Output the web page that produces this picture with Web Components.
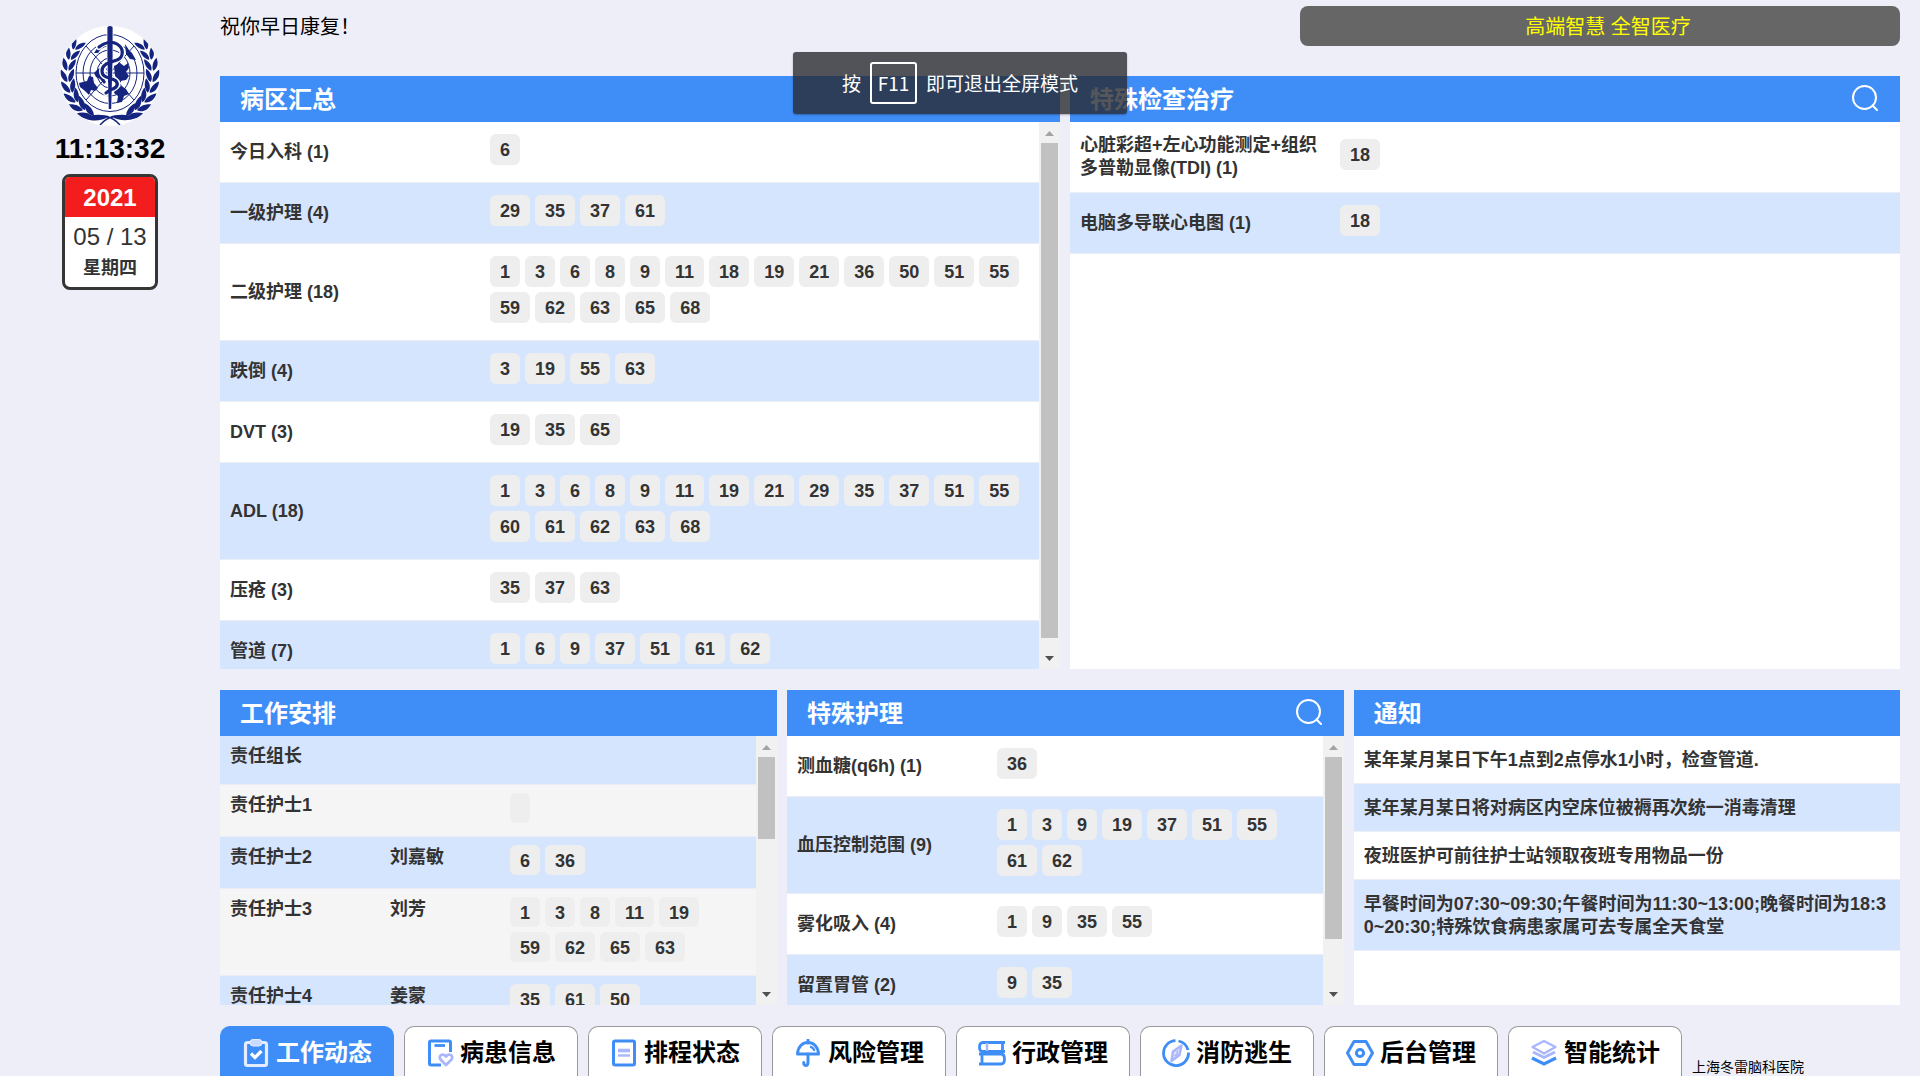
<!DOCTYPE html>
<html lang="zh-CN">
<head>
<meta charset="utf-8">
<title>病区看板</title>
<style>
html, body { height: 100%; }
body { margin: 0; background: #eeeef8; overflow: hidden;
  font-family: "Liberation Sans", "Noto Sans CJK SC", sans-serif; color: #333; }
</style>
</head>
<body>
<ward-board></ward-board>

<script>
const make = (name, css, html, setup) => {
  const tpl = document.createElement('template');
  tpl.innerHTML = `<style>*{box-sizing:border-box}${css}</style>${html}`;
  customElements.define(name, class extends HTMLElement {
    constructor() {
      super();
      this.attachShadow({ mode: 'open' }).append(tpl.content.cloneNode(true));
    }
    connectedCallback() {
      if (this.ready) return;
      this.ready = true;
      if (setup) setup(this, this.shadowRoot);
    }
  });
};

/* ---------- data ---------- */
const bedData = {
  summary: [
    ['今日入科 (1)', '6'],
    ['一级护理 (4)', '29 35 37 61'],
    ['二级护理 (18)', '1 3 6 8 9 11 18 19 21 36 50 51 55 59 62 63 65 68'],
    ['跌倒 (4)', '3 19 55 63'],
    ['DVT (3)', '19 35 65'],
    ['ADL (18)', '1 3 6 8 9 11 19 21 29 35 37 51 55 60 61 62 63 68'],
    ['压疮 (3)', '35 37 63'],
    ['管道 (7)', '1 6 9 37 51 61 62']
  ],
  exam: [
    ['心脏彩超+左心功能测定+组织多普勒显像(TDI) (1)', '18'],
    ['电脑多导联心电图 (1)', '18']
  ],
  care: [
    ['测血糖(q6h) (1)', '36'],
    ['血压控制范围 (9)', '1 3 9 19 37 51 55 61 62'],
    ['雾化吸入 (4)', '1 9 35 55'],
    ['留置胃管 (2)', '9 35']
  ]
};
const dutyData = [
  ['责任组长', '', null],
  ['责任护士1', '', ''],
  ['责任护士2', '刘嘉敏', '6 36'],
  ['责任护士3', '刘芳', '1 3 8 11 19 59 62 65 63'],
  ['责任护士4', '姜蒙', '35 61 50']
];

/* ---------- emblem ---------- */
const laurel = () => {
  let out = '';
  const leaf = (x, y, r, s) =>
    `<path transform="translate(${x.toFixed(1)} ${y.toFixed(1)}) rotate(${r.toFixed(0)}) scale(${s})" d="M0 0C-4.400-4-3.600-11 0.500-16C3.200-11 3.400-4 0 0Z"/>`;
  for (let i = 0; i < 8; i++) {
    const a = (24 + i * 14) * Math.PI / 180;
    const x = 50 - 42.5 * Math.sin(a), y = 48 + 46 * Math.cos(a);
    const dir = Math.atan2(-42.5 * Math.cos(a), 46 * Math.sin(a)) * 180 / Math.PI;
    const s = (1 - i * 0.03).toFixed(2);
    out += leaf(x - 0.8, y, dir - 20, s) + leaf(x + 1.2, y, dir + 26, s);
  }
  return out;
};
make('ward-emblem', `:host{display:block;width:100px;height:100px}svg{display:block}`, `
<svg width="100" height="100" viewBox="0 0 100 100" role="img" aria-label="徽标">
  <defs><clipPath id="c"><circle cx="50" cy="50" r="50"/></clipPath></defs>
  <g clip-path="url(#c)" fill="#15247f">
    <rect width="100" height="100" fill="#fff"/>
    <g>${laurel()}</g>
    <g transform="translate(100 0) scale(-1 1)">${laurel()}</g>
    <ellipse cx="50" cy="47" rx="35" ry="39.500" fill="#fff"/>
    <path d="M24 92C32 88 42 88 52 91C58 94 66 96 76 92C68 88 58 88 48 91C42 95 32 96 24 92Z"/>
    <path d="M40 99Q46 92 53 91M60 99Q54 92 47 91" fill="none" stroke="#15247f" stroke-width="1.400"/>
    <g fill="none" stroke="#15247f" stroke-width="1">
      <ellipse cx="50" cy="47" rx="34" ry="38.500"/>
      <ellipse cx="50" cy="47" rx="27" ry="30.500"/>
      <ellipse cx="50" cy="47" rx="20" ry="23"/>
      <ellipse cx="50" cy="47" rx="13" ry="15"/>
      <path d="M16 47H84M26 20L74 74M74 20L26 74"/>
    </g>
    <path d="M19 57L27 55L29 50L33 51L34 57L38 62L35 65L31 64L29 69L25 65L20 61Z"/>
    <path d="M34 47L38 43L41 41L42 50L46 56L44 58L40 53L36 51Z"/>
    <path d="M54 40L60 37L64 40L68 37L69 42L66 46L69 50L66 54L60 55L55 50Z"/>
    <path d="M55 63L61 60L66 63L69 68L64 70L62 76L57 77L58 70L54 67Z"/>
    <path d="M65 18L69 24L72 27L76 34L70 33L66 28Z"/>
    <path d="M34 27L38 21L44 17L47 20L41 23L38 27Z"/>
    <path d="M46.500 1Q50-1 53.500 1L52 83H48Z" fill="#fff"/>
    <g fill="none" stroke-linecap="round" stroke-linejoin="round">
      <path d="M39 21C45 16 52 15 57 18C64 22 64 31 57 34C49 37 42 38 42 45C42 53 52 51 56 55C60 60 54 63 50 64L46 67" stroke="#fff" stroke-width="6"/>
      <path d="M39 21C45 16 52 15 57 18C64 22 64 31 57 34C49 37 42 38 42 45C42 53 52 51 56 55C60 60 54 63 50 64L46 67" stroke="#15247f" stroke-width="3.200"/>
    </g>
    <path d="M47.400 1Q50-1 52.600 1V30L51.200 83H48.800L47.400 30Z"/>
  </g>
</svg>`);

/* ---------- date card ---------- */
make('date-card', `
:host{display:block;width:96px;border:3px solid #363636;border-radius:8px;background:#fff;overflow:hidden;text-align:center}
.y{height:40px;line-height:41px;background:#f31d1d;color:#fff;font-size:24px;font-weight:700}
.d{height:36px;line-height:40px;font-size:24px}
.w{height:34px;line-height:30px;font-size:18px;font-weight:700}`,
`<div class="y"><slot name="year"></slot></div><div class="d"><slot name="day"></slot></div><div class="w"><slot name="week"></slot></div>`);

make('side-rail', `
:host{display:flex;flex-direction:column;align-items:center;width:220px;padding-top:26px;flex:none}
time{font-size:28px;font-weight:700;line-height:46px;padding-bottom:2px;color:#000}`,
`<ward-emblem></ward-emblem><time>11:13:32</time>
<date-card><span slot="year">2021</span><span slot="day">05 / 13</span><span slot="week">星期四</span></date-card>`);

/* ---------- scroll bar ---------- */
make('scroll-bar', `
:host{display:flex;flex-direction:column;flex:none;width:21px;background:#f1f1f1}
svg{display:block;flex:none}
.track{flex:1;min-height:0;padding:0 2px}
.thumb{background:#c1c1c1;height:var(--thumb)}`,
`<svg width="21" height="21" viewBox="0 0 21 21"><path d="M6 14L10.500 9L15 14Z" fill="#a3a3a3"/></svg>
<div class="track"><div class="thumb"></div></div>
<svg width="21" height="21" viewBox="0 0 21 21"><path d="M6 8L10.500 13L15 8Z" fill="#505050"/></svg>`,
(el) => el.style.setProperty('--thumb', el.getAttribute('thumb')));

/* ---------- panel ---------- */
make('ward-panel', `
:host{display:flex;flex-direction:column;min-width:0;min-height:0;background:#fff}
header{display:flex;align-items:center;justify-content:space-between;height:46px;flex:none;padding:0 22px 0 20px;background:#3f8ef8;color:#fff}
h2{margin:0;font-size:24px;line-height:44px;padding-top:2px;font-weight:700}
button{display:block;width:26px;height:26px;padding:0;margin:0 0 2px;border:0;background:none;color:inherit}
button svg{display:block}
:host(:not([search])) button{display:none}
.body{flex:1;min-height:0;display:flex}
.content{flex:1;min-width:0;overflow:hidden}`,
`<header><h2></h2><button type="button" aria-label="搜索"><svg width="26" height="26" viewBox="0 0 26 26" fill="none" stroke="currentColor" stroke-width="2" stroke-linecap="round"><circle cx="12.500" cy="12.500" r="11.500"/><path d="M20.500 20.500L25 25"/></svg></button></header>
<div class="body"><div class="content"><slot></slot></div></div>`,
(el, root) => {
  root.querySelector('h2').textContent = el.getAttribute('heading');
  if (el.hasAttribute('thumb')) {
    const bar = document.createElement('scroll-bar');
    bar.setAttribute('thumb', el.getAttribute('thumb'));
    root.querySelector('.body').append(bar);
  }
});

/* ---------- bed chips ---------- */
make('bed-chips', `
:host{display:flex;flex-wrap:wrap}
span{min-width:20px;height:var(--chip-height,31px);line-height:32px;padding:0 10px;margin:0 5px 5px 0;border-radius:6px;background:#eee;font-size:18px;font-weight:700}`, ``,
(el, root) => {
  for (const bed of el.getAttribute('beds').split(' ')) {
    const s = document.createElement('span');
    s.textContent = bed;
    root.append(s);
  }
});

const tableCss = `
:host{display:block}
table{width:100%;border-collapse:separate;border-spacing:0;table-layout:fixed;font-size:18px;line-height:23px;font-weight:700}
th,td{text-align:left;font-weight:700;border-bottom:1px solid #ebeef5}`;

make('bed-table', `${tableCss}
th,td{padding:12px 10px;vertical-align:middle}
td{padding-left:0}
th{width:var(--label,270px)}
tr:nth-child(even){background:#d6e5fe}`, `<table><tbody></tbody></table>`,
(el, root) => {
  root.querySelector('tbody').innerHTML = bedData[el.getAttribute('source')]
    .map(([label, beds]) => `<tr><th scope="row">${label}</th><td><bed-chips beds="${beds}"></bed-chips></td></tr>`).join('');
});

make('duty-table', `${tableCss}
:host{--chip-height:30px}
th,td{padding:8px 0;vertical-align:top;line-height:24px}
tr{height:49px;background:#f5f5f5}
tr:nth-child(odd){background:#d6e5fe}
th{width:170px;padding-left:10px}
.name{width:120px}
td:last-child{padding-right:10px}`, `<table><tbody></tbody></table>`,
(el, root) => {
  root.querySelector('tbody').innerHTML = dutyData
    .map(([role, name, beds]) => `<tr><th scope="row">${role}</th><td class="name">${name}</td><td>${beds === null ? '' : `<bed-chips beds="${beds}"></bed-chips>`}</td></tr>`).join('');
});

make('notice-item', `
:host{display:block;padding:13px 10px 11px;border-bottom:1px solid #ebeef5;font-size:18px;line-height:23px;font-weight:700;word-break:break-all}
:host(:nth-of-type(even)){background:#d6e5fe}`, `<slot></slot>`);

/* ---------- bottom tabs ---------- */
const B = '#3f8ef8', L = '#a9b6fb';
const icons = {
  task: `<rect x="3.500" y="3.500" width="21" height="23" rx="2" fill="none" stroke="#e4edff" stroke-width="3.200"/><rect x="8" y="0.500" width="12" height="6.500" rx="3" fill="#c9dcff" stroke="#e4edff"/><path d="M9 14.500L13 18.500L19.500 12" fill="none" stroke="#fff" stroke-width="3.200"/>`,
  patient: `<path d="M24.500 13V3.500Q24.500 2 23 2H5Q3.500 2 3.500 3.500V24.500Q3.500 26 5 26H15" fill="none" stroke="${B}" stroke-width="3"/><path d="M8.500 6.500H19" stroke="${B}" stroke-width="2.800"/><path d="M20 26L14.500 20.500C12 17 16.500 13.500 20 17.500C23.500 13.500 28 17 25.500 20.500Z" fill="#fff" stroke="${L}" stroke-width="2.800" stroke-linejoin="round"/>`,
  schedule: `<rect x="3.500" y="2" width="21" height="24" rx="1.500" fill="none" stroke="${B}" stroke-width="3"/><path d="M8 11.500H20" stroke="${L}" stroke-width="3.600"/><path d="M8 16.500H20" stroke="${L}" stroke-width="2.400"/>`,
  risk: `<path d="M3.500 15C4 7 9 3.500 14 3.500S24 7 24.500 15Z" fill="none" stroke="${B}" stroke-width="3" stroke-linejoin="round"/><path d="M14 1V4M14 15V23Q14 26.500 11.800 26.500T9.800 23.500" fill="none" stroke="${B}" stroke-width="3" stroke-linecap="round"/><path d="M16 7.500Q19.500 8.500 20.500 12" fill="none" stroke="${B}" stroke-width="2"/>`,
  admin: `<path d="M27 3.500H5Q1.500 3.500 1.500 8T5 12.500H27M24.500 4V12M1 15H23Q26.500 15 26.500 20T23 25H1M4 15.500V25" fill="none" stroke="${B}" stroke-width="2.800"/><path d="M9 4V12" stroke="${L}" stroke-width="2.400"/>`,
  fire: `<path d="M16.500 2A12.500 12.500 0 0 1 26 11M26.500 13.500A12.500 12.500 0 1 1 13.500 1.600" fill="none" stroke="${B}" stroke-width="2.800"/><path d="M19.500 6.500L17.500 16L9.500 22L11 12.500Z" fill="#dde3ff" stroke="${L}" stroke-width="2.400" stroke-linejoin="round"/><path d="M15.500 11.500L15 15.500L12.500 17" fill="none" stroke="${L}" stroke-width="1.600"/>`,
  system: `<path d="M8 2.500H20L26.500 14L20 25.500H8L1.500 14Z" fill="none" stroke="${B}" stroke-width="3" stroke-linejoin="round"/><circle cx="14" cy="14" r="3.600" fill="none" stroke="${B}" stroke-width="3"/>`,
  stats: `<path d="M14 2L25.500 8L14 14.500L2.500 8Z" fill="none" stroke="${L}" stroke-width="2.400" stroke-linejoin="round"/><path d="M3 13L14 18.500L25 13" fill="none" stroke="${L}" stroke-width="2.800"/><path d="M2 19L14 25L26 19" fill="none" stroke="${B}" stroke-width="3.200"/>`
};
make('nav-tab', `
:host{display:block;flex:none;width:174px;height:50px}
button{display:flex;align-items:center;justify-content:center;gap:6px;width:100%;height:100%;padding:3px 0 0;border:1px solid #999;border-bottom:0;border-radius:10px 10px 0 0;background:#fff;color:#000;font:700 24px/46px "Liberation Sans","Noto Sans CJK SC",sans-serif;white-space:nowrap}
:host([active]) button{background:#3f8ef8;border-color:#3f8ef8;color:#fff}
svg{display:block;flex:none}`,
`<button type="button"><svg width="28" height="28" viewBox="0 0 28 28"></svg><slot></slot></button>`,
(el, root) => { root.querySelector('svg').innerHTML = icons[el.getAttribute('icon')]; });

/* ---------- full screen hint ---------- */
make('screen-hint', `
:host{position:absolute;top:52px;left:0;right:0;margin:0 auto;display:flex;align-items:center;justify-content:center;gap:9px;width:334px;height:62px;border-radius:3px;background:rgba(39,41,46,.79);color:#fff;font:19px/44px "Noto Sans CJK SC",sans-serif;white-space:nowrap;box-shadow:0 1px 2px rgba(0,0,0,.3)}
kbd{font:inherit;line-height:38px;height:42px;width:47px;text-align:center;border:2px solid #fff;border-radius:3px}`,
`<span>按</span><kbd>F11</kbd><span>即可退出全屏模式</span>`);

/* ---------- page ---------- */
make('ward-board', `
:host{display:flex;height:100vh;min-height:700px}
main{flex:1;min-width:0;display:flex;flex-direction:column;padding-right:20px}
.top{display:flex;justify-content:space-between;height:76px;flex:none;padding-top:6px;font-size:20px;line-height:42px;color:#000}
.motto{width:600px;height:40px;border-radius:8px;background:#666;color:#ff0;text-align:center;padding-left:16px}
p{margin:0}
.grid{display:grid;gap:10px;min-height:0;margin-bottom:21px}
.a{flex:593 1 0;grid-template:minmax(0,1fr) / 50% 1fr}
.b{flex:315 1 0;grid-template:minmax(0,1fr) / 33.15% 33.15% 1fr}
.b bed-table{--label:210px}
nav{display:flex;gap:10px;height:50px;flex:none}
small{align-self:flex-end;font-size:14px;line-height:18px;color:#000;white-space:nowrap}`,
`<side-rail></side-rail>
<main>
  <div class="top"><p>祝你早日康复！</p><p class="motto">高端智慧 全智医疗</p></div>
  <section class="grid a">
    <ward-panel heading="病区汇总" thumb="98%"><bed-table source="summary"></bed-table></ward-panel>
    <ward-panel heading="特殊检查治疗" search><bed-table source="exam"></bed-table></ward-panel>
  </section>
  <section class="grid b">
    <ward-panel heading="工作安排" thumb="36%"><duty-table></duty-table></ward-panel>
    <ward-panel heading="特殊护理" search thumb="80%"><bed-table source="care"></bed-table></ward-panel>
    <ward-panel heading="通知">
      <notice-item>某年某月某日下午1点到2点停水1小时，检查管道.</notice-item>
      <notice-item>某年某月某日将对病区内空床位被褥再次统一消毒清理</notice-item>
      <notice-item>夜班医护可前往护士站领取夜班专用物品一份</notice-item>
      <notice-item>早餐时间为07:30~09:30;午餐时间为11:30~13:00;晚餐时间为18:30~20:30;特殊饮食病患家属可去专属全天食堂</notice-item>
    </ward-panel>
  </section>
  <nav>
    <nav-tab icon="task" active>工作动态</nav-tab>
    <nav-tab icon="patient">病患信息</nav-tab>
    <nav-tab icon="schedule">排程状态</nav-tab>
    <nav-tab icon="risk">风险管理</nav-tab>
    <nav-tab icon="admin">行政管理</nav-tab>
    <nav-tab icon="fire">消防逃生</nav-tab>
    <nav-tab icon="system">后台管理</nav-tab>
    <nav-tab icon="stats">智能统计</nav-tab>
    <small>上海冬雷脑科医院</small>
  </nav>
</main>
<screen-hint></screen-hint>`);
</script>
</body>
</html>
